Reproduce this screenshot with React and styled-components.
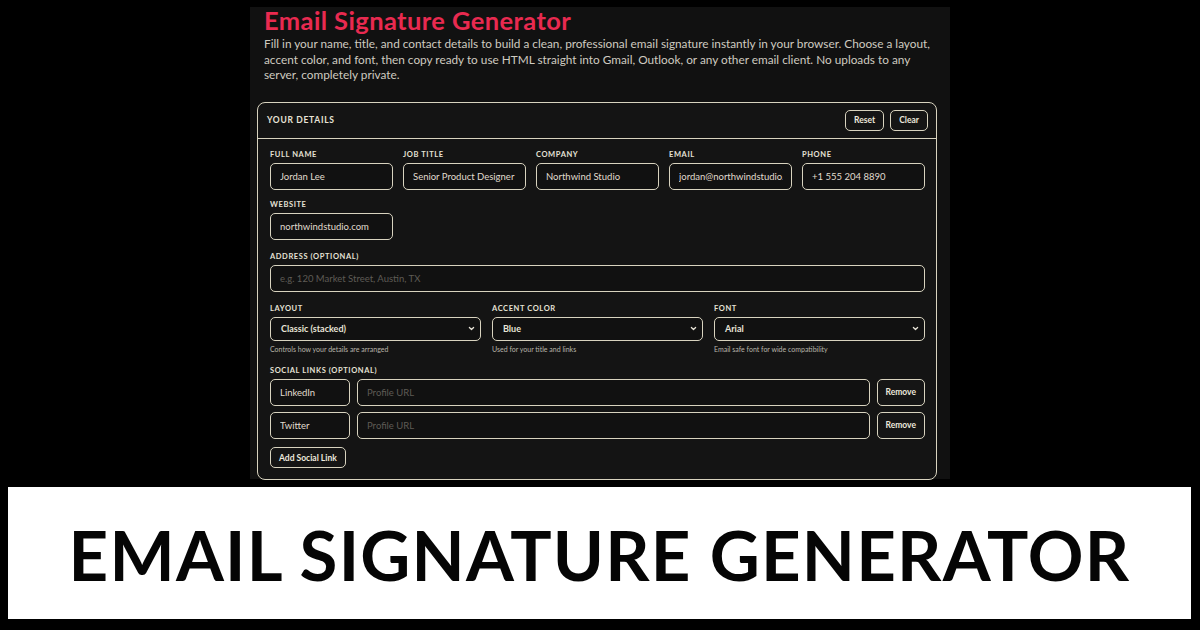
import React from "react";
import styled, { createGlobalStyle } from "styled-components";

const GlobalStyle = createGlobalStyle`
	html, body {
		margin: 0;
		padding: 0;
		background: #000;
	}
	body {
		font-family: "Lato", "Noto Sans", sans-serif;
		color: #e6e2d6;
	}
	* {
		box-sizing: border-box;
	}
`;

const cream = "#d8d3bf";

const Screen = styled.div`
	width: 1200px;
	height: 630px;
	overflow: hidden;
	padding-top: 8px;
`;

const Panel = styled.div`
	width: 700px;
	height: 472px;
	margin: 0 auto;
	background: #111;
	padding: 0 13px 0 7px;
`;

const Intro = styled.div`
	padding: 0 0 0 7px;
`;

const Title = styled.h1`
	margin: -1px 0 0;
	font-size: 25.5px;
	line-height: 26px;
	font-weight: 700;
	letter-spacing: 0.4px;
	color: #e92a50;
`;

const Lead = styled.p`
	margin: 3px 0 0;
	font-size: 11.8px;
	line-height: 15.5px;
	color: #cfcbc0;
`;

const Card = styled.section`
	margin-top: 19px;
	border: 1.5px solid ${cream};
	border-radius: 8px;
	background: #141414;
	height: 378px;
	overflow: hidden;
`;

const CardHeader = styled.div`
	height: 36px;
	display: flex;
	align-items: center;
	justify-content: space-between;
	padding: 0 8px 0 9px;
	border-bottom: 1.5px solid ${cream};
`;

const CardTitle = styled.div`
	font-size: 8.5px;
	font-weight: 700;
	letter-spacing: 0.7px;
	color: #e8e4d8;
`;

const Actions = styled.div`
	display: flex;
	gap: 6px;
`;

const SmallButton = styled.button`
	height: ${(p) => p.$h || 21}px;
	padding: 0 ${(p) => p.$px || 8}px;
	border: 1.5px solid ${cream};
	border-radius: 5px;
	background: #151515;
	color: #ece8dc;
	font-family: inherit;
	font-size: 8.5px;
	font-weight: 700;
`;

const CardBody = styled.div`
	padding: 11px 11px 0 12px;
	display: flex;
	flex-direction: column;
	gap: 12px;
`;

const Grid = styled.div`
	display: grid;
	grid-template-columns: repeat(${(p) => p.$cols}, 1fr);
	column-gap: ${(p) => p.$gap}px;
	row-gap: 10px;
`;

const Field = styled.div`
	display: flex;
	flex-direction: column;
`;

const Label = styled.label`
	font-size: 7.5px;
	font-weight: 700;
	letter-spacing: 0.6px;
	color: #e6e2d6;
	line-height: 9px;
	margin-bottom: 4px;
`;

const Input = styled.input`
	width: ${(p) => (p.$w ? `${p.$w}px` : "100%")};
	flex: ${(p) => (p.$grow ? 1 : "none")};
	min-width: 0;
	height: 27px;
	border: 1.5px solid ${cream};
	border-radius: 5px;
	background: #111;
	color: #e0dccf;
	font-family: inherit;
	font-size: 9.5px;
	padding: 0 8px 0 9px;
	outline: none;
	&::placeholder {
		color: #5e5b55;
	}
`;

const SelectBox = styled.div`
	height: 24px;
	border: 1.5px solid ${cream};
	border-radius: 5px;
	background: #111;
	display: flex;
	align-items: center;
	justify-content: space-between;
	padding: 0 5px 0 10px;
	font-size: 9px;
	font-weight: 700;
	color: #e8e4d8;
`;

const Hint = styled.div`
	margin-top: 4px;
	font-size: 7px;
	line-height: 9px;
	color: #b9b5aa;
`;

const SocialList = styled.div`
	display: flex;
	flex-direction: column;
	gap: 6px;
`;

const SocialRow = styled.div`
	display: flex;
	gap: 7px;
	align-items: center;
`;

const Chevron = () => (
	<svg width="7" height="7" viewBox="0 0 10 10">
		<path
			d="M2 3.5 L5 6.5 L8 3.5"
			fill="none"
			stroke="#e8e4d8"
			strokeWidth="1.8"
			strokeLinecap="round"
			strokeLinejoin="round"
		/>
	</svg>
);

const Banner = styled.div`
	margin: 8px 9px 0 8px;
	height: 132px;
	background: #fff;
	display: flex;
	align-items: center;
	justify-content: center;
`;

const BannerText = styled.div`
	font-family: "Lato", "Noto Sans", sans-serif;
	font-weight: 700;
	font-size: 69px;
	letter-spacing: 1.2px;
	color: #050505;
	padding-top: 2px;
`;

const details = [
	{ label: "FULL NAME", value: "Jordan Lee" },
	{ label: "JOB TITLE", value: "Senior Product Designer" },
	{ label: "COMPANY", value: "Northwind Studio" },
	{ label: "EMAIL", value: "jordan@northwindstudio.com" },
	{ label: "PHONE", value: "+1 555 204 8890" },
	{ label: "WEBSITE", value: "northwindstudio.com" },
];

const selects = [
	{ label: "LAYOUT", value: "Classic (stacked)", hint: "Controls how your details are arranged" },
	{ label: "ACCENT COLOR", value: "Blue", hint: "Used for your title and links" },
	{ label: "FONT", value: "Arial", hint: "Email safe font for wide compatibility" },
];

const socials = ["LinkedIn", "Twitter"];

export default function App() {
	return (
		<>
			<GlobalStyle />
			<Screen>
				<Panel>
					<Intro>
						<Title>Email Signature Generator</Title>
						<Lead>
							Fill in your name, title, and contact details to build a clean,
							professional email signature instantly in your browser. Choose a
							layout, accent color, and font, then copy ready to use HTML straight
							into Gmail, Outlook, or any other email client. No uploads to any
							server, completely private.
						</Lead>
					</Intro>
					<Card>
						<CardHeader>
							<CardTitle>YOUR DETAILS</CardTitle>
							<Actions>
								<SmallButton>Reset</SmallButton>
								<SmallButton>Clear</SmallButton>
							</Actions>
						</CardHeader>
						<CardBody>
							<Grid $cols={5} $gap={10}>
								{details.map((d) => (
									<Field key={d.label}>
										<Label>{d.label}</Label>
										<Input readOnly value={d.value} />
									</Field>
								))}
							</Grid>
							<Field>
								<Label>ADDRESS (OPTIONAL)</Label>
								<Input readOnly placeholder="e.g. 120 Market Street, Austin, TX" />
							</Field>
							<Grid $cols={3} $gap={11}>
								{selects.map((s) => (
									<Field key={s.label}>
										<Label>{s.label}</Label>
										<SelectBox>
											{s.value}
											<Chevron />
										</SelectBox>
										<Hint>{s.hint}</Hint>
									</Field>
								))}
							</Grid>
							<Field>
								<Label>SOCIAL LINKS (OPTIONAL)</Label>
								<SocialList>
									{socials.map((s) => (
										<SocialRow key={s}>
											<Input $w={80} readOnly value={s} />
											<Input $grow readOnly placeholder="Profile URL" />
											<SmallButton $h={27} $px={8}>
												Remove
											</SmallButton>
										</SocialRow>
									))}
									<div>
										<SmallButton $px={8}>Add Social Link</SmallButton>
									</div>
								</SocialList>
							</Field>
						</CardBody>
					</Card>
				</Panel>
				<Banner>
					<BannerText>EMAIL SIGNATURE GENERATOR</BannerText>
				</Banner>
			</Screen>
		</>
	);
}
